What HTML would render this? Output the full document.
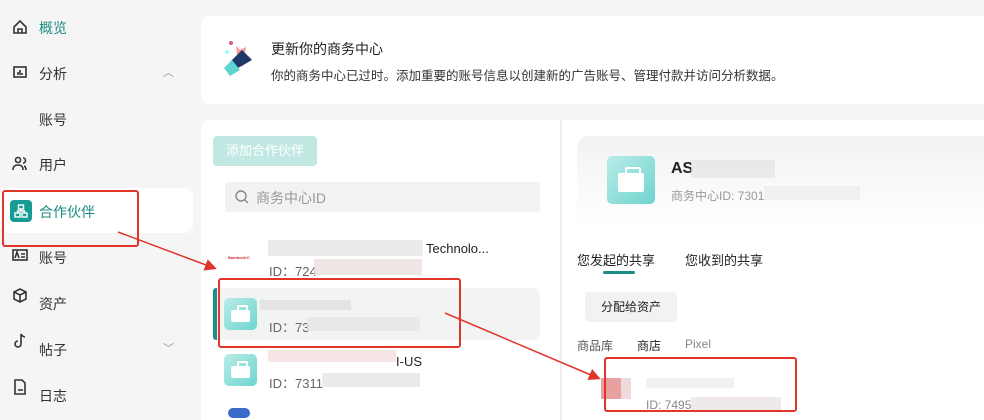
<!DOCTYPE html>
<html><head><meta charset="utf-8"><style>
*{margin:0;padding:0;box-sizing:border-box}
body{width:984px;height:414px;overflow:hidden;background:#f5f5f5;font-family:"Liberation Sans","Noto Sans CJK SC",sans-serif;color:#222;position:relative;font-size:14px}
.a{position:absolute;white-space:nowrap}
.nav{font-size:14px;color:#333}
.blur{position:absolute;background:#e6e6e6;opacity:.8}
.case{position:absolute;border-radius:5px;background:linear-gradient(135deg,#b9ece8,#6fd4cf)}
.case:after{content:"";position:absolute;left:22%;top:36%;width:56%;height:38%;background:#fff;border-radius:2px}
.case:before{content:"";position:absolute;left:38%;top:22%;width:24%;height:18%;border:2px solid #fff;border-bottom:none;border-radius:2px 2px 0 0}
</style></head><body>
<!-- sidebar -->
<div class="a" style="left:0;top:188px;width:193px;height:45px;background:#fff;border-radius:8px"></div>
<svg class="a" style="left:12px;top:18px" width="18" height="390" viewBox="0 0 18 390" fill="none" stroke="#333" stroke-width="1.6">
<path d="M2 9 L8 3 L14 9 V15 H2Z M6 15 V11 H10 V15"/>
<rect x="2" y="49" width="12" height="10"/><path d="M6 57V54 M8 57V52 M10 57V55"/>
<circle cx="6" cy="142" r="2.5"/><path d="M1 152c0-4 2-5 5-5s5 1 5 5 M11 140a2.5 2.5 0 010 5 M14 152c0-2-1-4-2-4"/>
<rect x="1" y="232" width="14" height="10"/><path d="M3 240l2-6 2 6 M9 236h4 M9 239h4"/>
<path d="M8 271l6 3v7l-6 3-6-3v-7z M2 274l6 3 6-3 M8 277v7"/>
<path d="M9 316v10a3 3 0 11-3-3 M9 316c1 2 3 3 4 3"/>
<path d="M3 362h7l3 3v11H3z M6 372h5"/>
</svg>
<div class="a" style="left:10px;top:200px;width:22px;height:22px;border-radius:4px;background:#179c93"></div>
<svg class="a" style="left:13px;top:203px" width="16" height="16" viewBox="0 0 16 16" fill="none" stroke="#fff" stroke-width="1.4"><rect x="5.5" y="2" width="5" height="4"/><rect x="2" y="10" width="5" height="4"/><rect x="9" y="10" width="5" height="4"/><path d="M8 6v2M4.5 10V8h7v2"/></svg>
<div class="a nav" style="left:39px;top:18px;color:#1d8c84">概览</div>
<div class="a nav" style="left:39px;top:64px">分析</div>
<div class="a" style="left:163px;top:64px;color:#999;font-size:11px">︿</div>
<div class="a nav" style="left:39px;top:110px">账号</div>
<div class="a nav" style="left:39px;top:155px">用户</div>
<div class="a nav" style="left:39px;top:202px;color:#1d8c84">合作伙伴</div>
<div class="a nav" style="left:39px;top:248px">账号</div>
<div class="a nav" style="left:39px;top:294px">资产</div>
<div class="a nav" style="left:39px;top:340px">帖子</div>
<div class="a" style="left:163px;top:340px;color:#999;font-size:11px">﹀</div>
<div class="a nav" style="left:39px;top:386px">日志</div>
<!-- banner -->
<div class="a" style="left:201px;top:16px;width:790px;height:88px;background:#fff;border-radius:8px"></div>
<svg class="a" style="left:222px;top:38px" width="36" height="44" viewBox="0 0 36 44"><circle cx="9" cy="5" r="2" fill="#e05a7a"/><circle cx="5" cy="14" r="2" fill="#9fe"/><path d="M14 8l4 4 6-3-1 7 6 4-7 2-1 7-5-5z" fill="#f59a9a"/><path d="M8 24l12-12 10 10-14 8z" fill="#1f3a66"/><path d="M2 30l8-8 8 10-10 6z" fill="#5fd3cf"/></svg>
<div class="a" style="left:271px;top:39px;font-size:14px">更新你的商务中心</div>
<div class="a" style="left:271px;top:65px;font-size:12.5px;color:#333">你的商务中心已过时。添加重要的账号信息以创建新的广告账号、管理付款并访问分析数据。</div>
<!-- left panel -->
<div class="a" style="left:201px;top:120px;width:359px;height:300px;background:#fff;border-radius:8px 0 0 0"></div>
<div class="a" style="left:560px;top:120px;width:2px;height:300px;background:#eee"></div>
<div class="a" style="left:213px;top:136px;width:104px;height:30px;background:#c2e8e4;border-radius:4px;color:#fff;font-size:13px;text-align:center;line-height:30px">添加合作伙伴</div>
<div class="a" style="left:225px;top:182px;width:315px;height:30px;background:#f1f2f2;border-radius:3px"></div>
<svg class="a" style="left:235px;top:190px" width="14" height="14" fill="none" stroke="#888" stroke-width="1.4"><circle cx="6" cy="6" r="5"/><path d="M10 10l3 3"/></svg>
<div class="a" style="left:256px;top:188px;font-size:14px;color:#999">商务中心ID</div>
<div class="a" style="left:228px;top:255px;font-size:4px;color:#c33;font-weight:bold">BambooKC</div>
<div class="blur" style="left:268px;top:240px;width:155px;height:16px"></div>
<div class="a" style="left:426px;top:241px;font-size:13px">Technolo...</div>
<div class="a" style="left:269px;top:261px;font-size:13px;color:#666">ID：724</div>
<div class="blur" style="left:314px;top:259px;width:108px;height:16px;background:#ecdede"></div>
<div class="a" style="left:213px;top:288px;width:327px;height:52px;background:#f2f3f3;border-radius:6px"></div>
<div class="a" style="left:213px;top:288px;width:4px;height:52px;background:#1a8f87;border-radius:3px 0 0 3px"></div>
<div class="case" style="left:224px;top:298px;width:33px;height:32px"></div>
<div class="blur" style="left:260px;top:300px;width:91px;height:10px;background:#e0e0e0"></div>
<div class="a" style="left:269px;top:317px;font-size:13px;color:#666">ID：73</div>
<div class="blur" style="left:307px;top:317px;width:113px;height:14px"></div>
<div class="case" style="left:224px;top:354px;width:33px;height:32px"></div>
<div class="blur" style="left:268px;top:350px;width:128px;height:12px;background:#f3dede"></div>
<div class="a" style="left:396px;top:354px;font-size:13px">I-US</div>
<div class="a" style="left:269px;top:373px;font-size:13px;color:#666">ID：7311</div>
<div class="blur" style="left:322px;top:373px;width:98px;height:14px"></div>
<div class="a" style="left:228px;top:408px;width:22px;height:10px;border-radius:5px;background:#3a6bc8"></div>
<!-- right panel -->
<div class="a" style="left:562px;top:120px;width:430px;height:300px;background:#fff"></div>
<div class="a" style="left:577px;top:136px;width:420px;height:92px;border-radius:12px;background:linear-gradient(180deg,#f1f2f2,#fff)"></div>
<div class="case" style="left:607px;top:156px;width:48px;height:48px"></div>
<div class="a" style="left:671px;top:160px;font-size:16px;font-weight:bold">AS</div>
<div class="blur" style="left:691px;top:160px;width:84px;height:18px"></div>
<div class="a" style="left:671px;top:187px;font-size:12px;color:#999">商务中心ID:  7301</div>
<div class="blur" style="left:764px;top:186px;width:96px;height:14px;background:#eee"></div>
<div class="a" style="left:577px;top:250px;font-size:13px">您发起的共享</div>
<div class="a" style="left:685px;top:250px;font-size:13px">您收到的共享</div>
<div class="a" style="left:603px;top:271px;width:32px;height:3px;background:#1a8f87;border-radius:2px"></div>
<div class="a" style="left:585px;top:292px;width:92px;height:30px;background:#f1f2f2;border-radius:4px;font-size:12px;text-align:center;line-height:30px">分配给资产</div>
<div class="a" style="left:577px;top:337px;font-size:12px;color:#555">商品库</div>
<div class="a" style="left:637px;top:337px;font-size:12px">商店</div>
<div class="a" style="left:685px;top:337px;font-size:12px;color:#888">Pixel</div>
<div class="a" style="left:601px;top:378px;width:20px;height:21px;background:#e8a0a0"></div>
<div class="a" style="left:621px;top:378px;width:10px;height:21px;background:#eedada"></div>
<div class="blur" style="left:646px;top:378px;width:88px;height:10px;background:#eee"></div>
<div class="a" style="left:646px;top:398px;font-size:12px;color:#888">ID: 7495</div>
<div class="blur" style="left:691px;top:397px;width:90px;height:14px;background:#ebe3e3"></div>
<!-- annotations -->
<div class="a" style="left:2px;top:190px;width:137px;height:57px;border:2.5px solid #e0352b;border-radius:3px"></div>
<div class="a" style="left:218px;top:278px;width:243px;height:70px;border:2.5px solid #e0352b;border-radius:3px"></div>
<div class="a" style="left:604px;top:357px;width:193px;height:55px;border:2.5px solid #e0352b;border-radius:3px"></div>
<svg class="a" style="left:0;top:0" width="984" height="414"><defs><marker id="m" markerWidth="8" markerHeight="8" refX="6" refY="4" orient="auto"><path d="M0 0L8 4L0 8z" fill="#e0352b"/></marker></defs>
<path d="M118 232L214 268" stroke="#e0352b" stroke-width="1.5" marker-end="url(#m)"/>
<path d="M445 313L598 378" stroke="#e0352b" stroke-width="1.5" marker-end="url(#m)"/></svg>
</body></html>
